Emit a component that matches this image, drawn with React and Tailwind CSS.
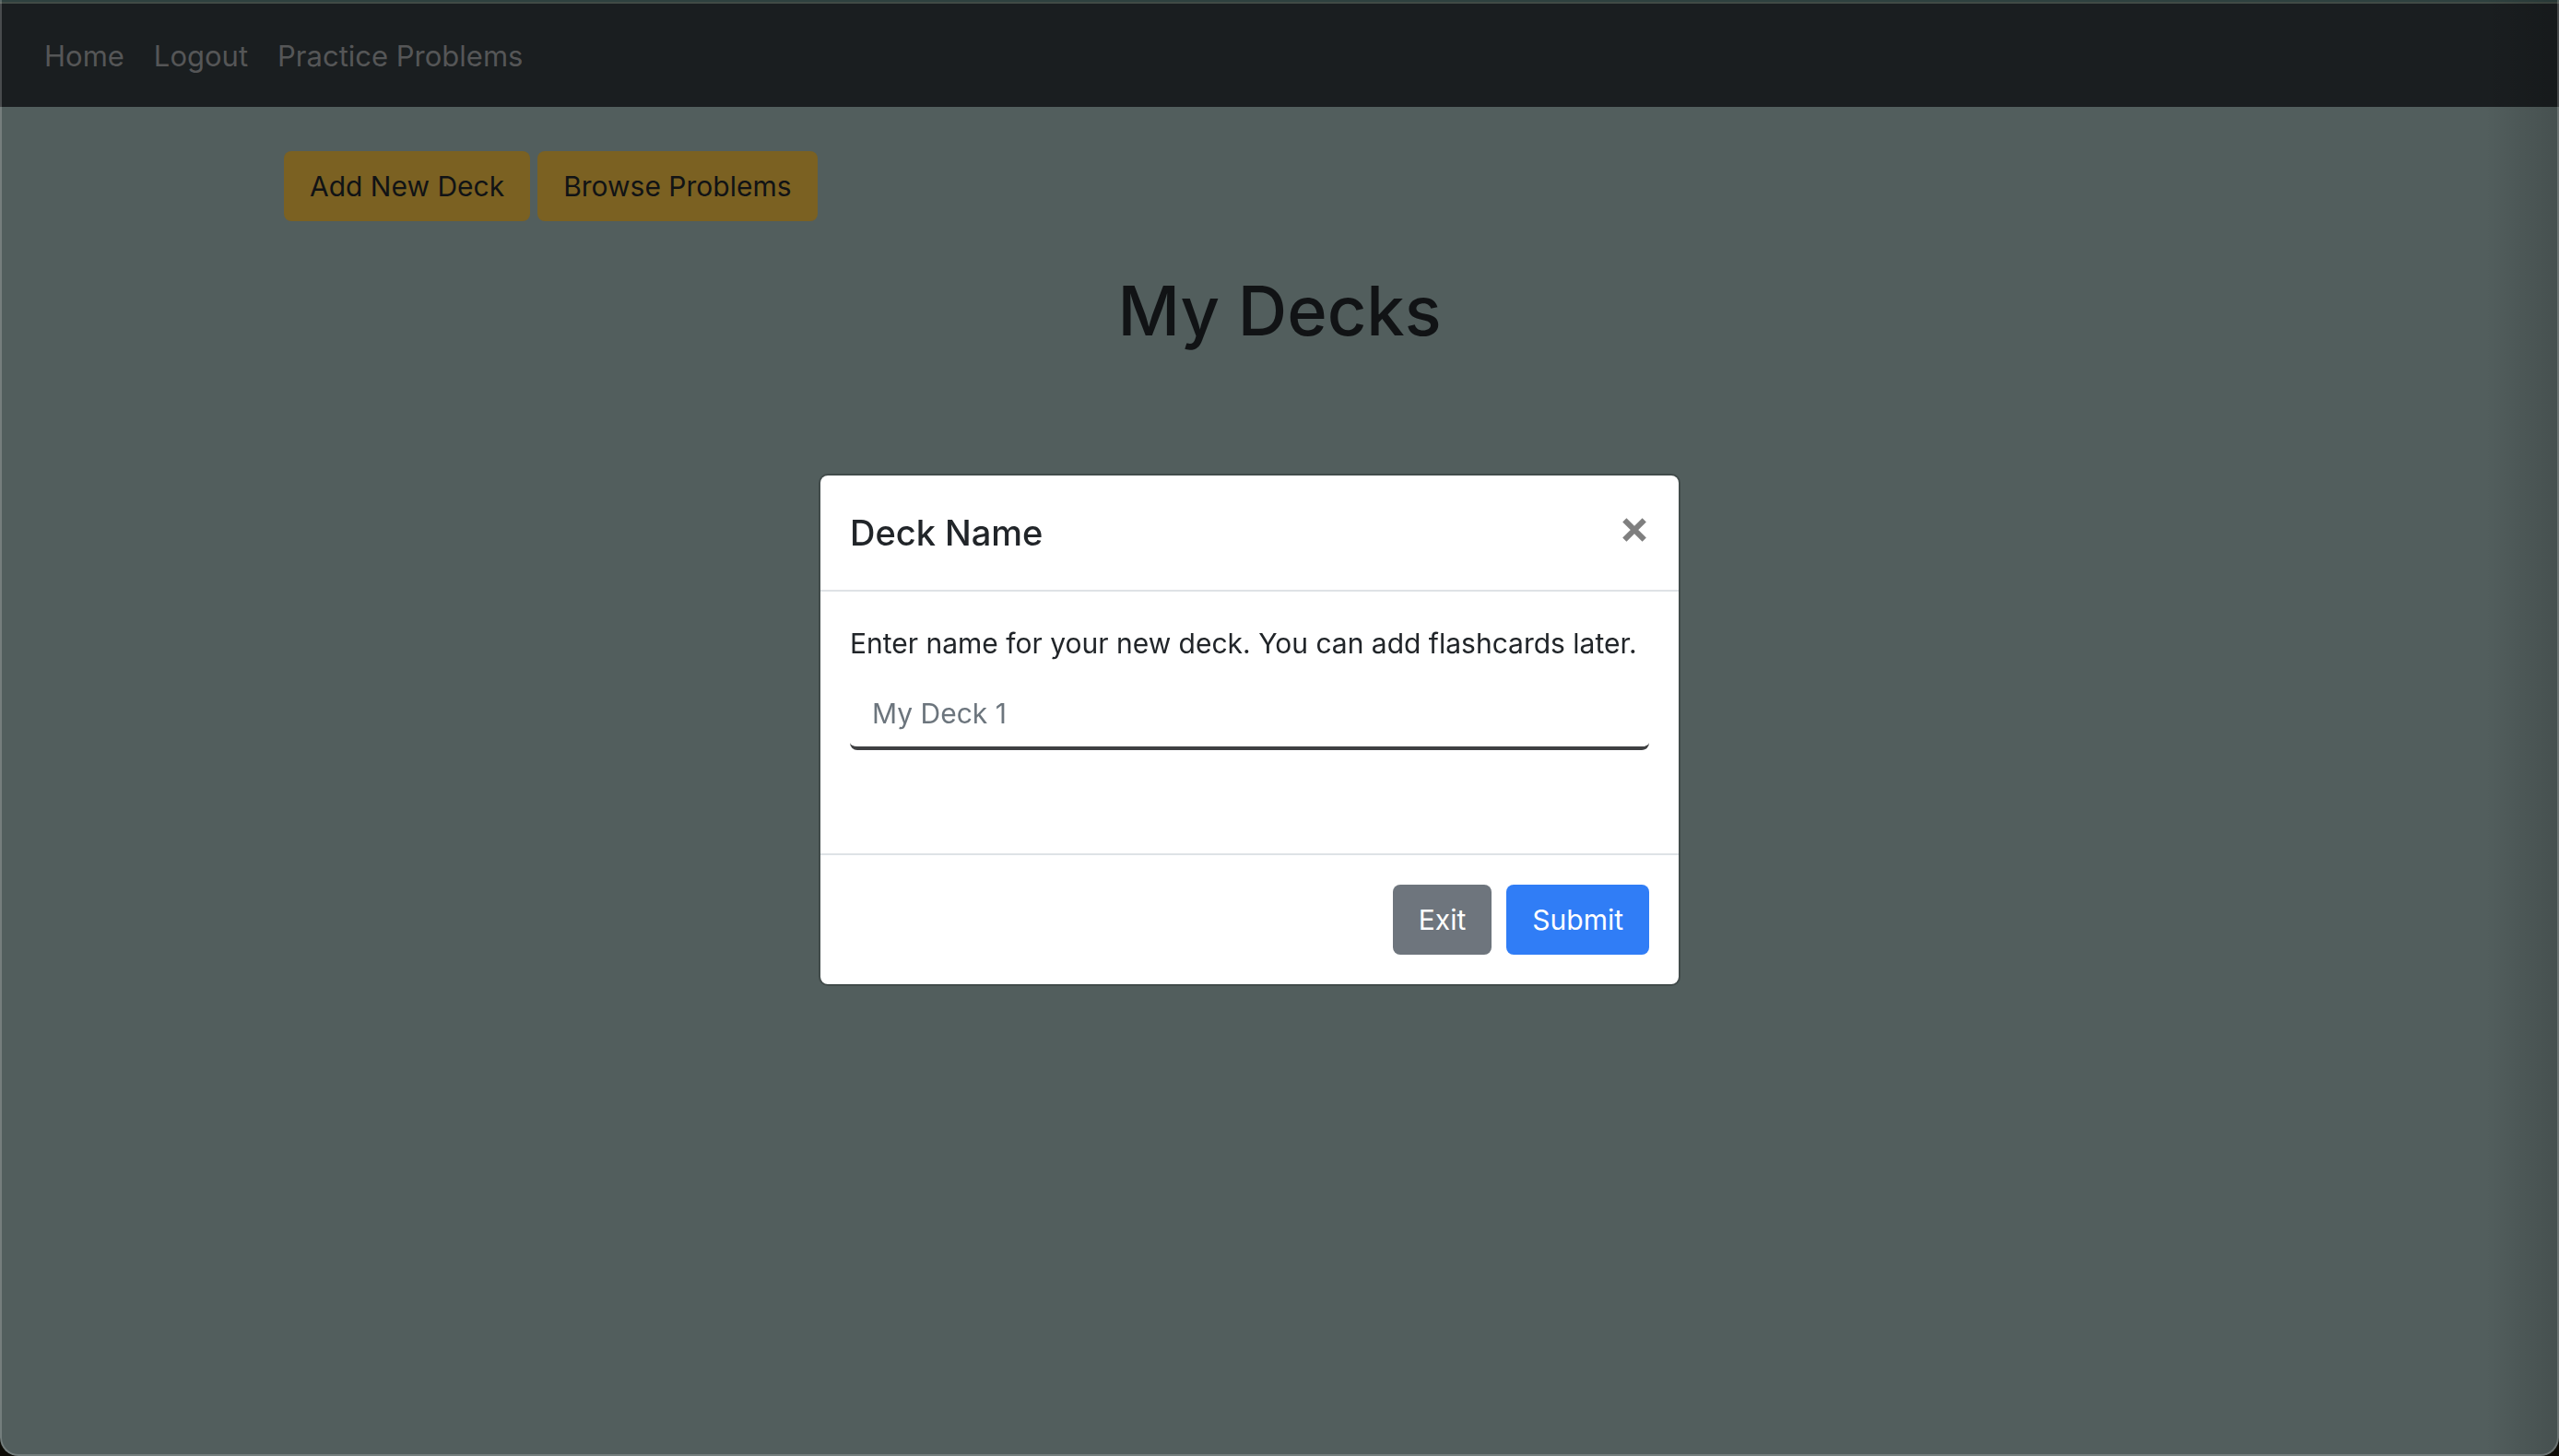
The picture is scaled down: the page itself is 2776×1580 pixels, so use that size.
import React from "react";

const navLinks = ["Home", "Logout", "Practice Problems"];

function NavBar() {
  return (
    <nav className="flex min-h-28 flex-wrap items-center gap-8 bg-[#1a1e20] px-12 pt-px text-[31px]">
      {navLinks.map((label) => (
        <a key={label} href="#" className="text-[#555657]">
          {label}
        </a>
      ))}
    </nav>
  );
}

function DeckButton({ children }) {
  return (
    <button type="button" className="h-19 rounded-lg bg-[#7b6122] px-7 text-[#111315]">
      {children}
    </button>
  );
}

function DeckModal() {
  return (
    <div className="fixed inset-0 px-4 pt-[514px]">
      <div className="mx-auto max-w-[1000px]">
        <form
          role="dialog"
          aria-labelledby="deck-title"
          onSubmit={(e) => e.preventDefault()}
          className="w-[935px] max-w-full rounded-[10px] border-2 border-black/20 bg-white bg-clip-padding text-[#212529]"
        >
          <header className="flex items-start justify-between border-b-2 border-[#dee2e6] p-8">
            <h5 id="deck-title" className="text-[38px] leading-[60px] font-medium">
              Deck Name
            </h5>
            <button type="button" aria-label="Close" className="pt-[14px]">
              <svg className="h-[26px] w-8" viewBox="0 0 32 26" fill="none">
                <path d="M5.3 2.3 26.7 23.7M26.7 2.3 5.3 23.7" stroke="#7f7f7f" strokeWidth="6" />
              </svg>
            </button>
          </header>
          <div className="p-8 pb-28">
            <label htmlFor="deck-name" className="mb-4 block">
              Enter name for your new deck. You can add flashcards later.
            </label>
            <input
              id="deck-name"
              type="text"
              placeholder="My Deck 1"
              className="block h-19 w-full rounded-lg border-b-4 border-[#3f4042] px-6 outline-none placeholder:text-[#6c757d]"
            />
          </div>
          <footer className="flex justify-end gap-4 border-t-2 border-[#dee2e6] p-8">
            <button type="button" className="h-19 rounded-lg bg-[#6e757d] px-7 text-white">
              Exit
            </button>
            <button type="submit" className="h-19 rounded-lg bg-[#307df6] px-7 text-white">
              Submit
            </button>
          </footer>
        </form>
      </div>
    </div>
  );
}

export default function App() {
  return (
    <div className="min-h-screen bg-[#0d0c06] font-['Inter',sans-serif] text-[30px] leading-[48px]">
      <div className="relative min-h-screen overflow-hidden rounded-b-[20px] bg-[#525e5d]">
        <div className="h-1 border-b-2 border-[#414b45] bg-[#2e413f]" />
        <NavBar />
        <main className="mx-auto max-w-[2160px] pt-12">
          <div className="flex gap-2">
            <DeckButton>Add New Deck</DeckButton>
            <DeckButton>Browse Problems</DeckButton>
          </div>
          <h1 className="mt-12 text-center text-[74px] leading-[98px] font-medium text-[#111315]">My Decks</h1>
        </main>
        <div className="pointer-events-none absolute inset-y-0 right-0 w-20 bg-linear-to-r from-transparent to-black/15" />
        <div className="pointer-events-none absolute inset-0 rounded-b-[20px] border-x-2 border-b-2 border-white/20" />
      </div>
      <DeckModal />
    </div>
  );
}
